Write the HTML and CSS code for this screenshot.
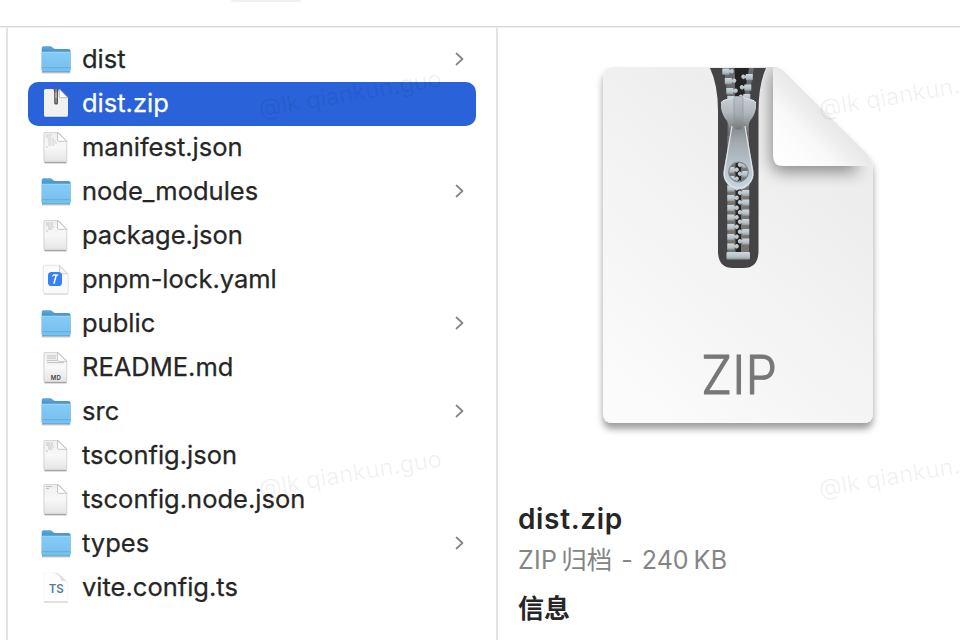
FILE: index.html
```
<!DOCTYPE html>
<html lang="zh-CN">
<head>
<meta charset="utf-8">
<title>dist.zip</title>
<link rel="stylesheet" href="styles.css">
</head>
<body>
<svg class="defs" width="0" height="0" aria-hidden="true">
  <defs>
    <linearGradient id="fback" x1="0" y1="0" x2="0" y2="1"><stop offset="0" stop-color="#5aa9dc"/><stop offset=".3" stop-color="#3f8cc6"/></linearGradient>
    <linearGradient id="ffront" x1="0" y1="0" x2="0" y2="1"><stop offset="0" stop-color="#86cbf5"/><stop offset="1" stop-color="#74bfee"/></linearGradient>
    <linearGradient id="paper" x1="0" y1="0" x2="0" y2="1"><stop offset="0" stop-color="#eeeeee"/><stop offset=".5" stop-color="#f8f8f8"/><stop offset="1" stop-color="#e4e4e4"/></linearGradient>
    <symbol id="folder" viewBox="0 0 32 32">
      <path d="M2 28.500h28" stroke="#000" stroke-opacity=".25" stroke-width="1.800"/>
      <path d="M1.700 4.200q0-2 1.800-2h6.800q1 0 1.800.8l1.200 1.200q.9.800 2 .8h13.400q1.800 0 1.800 1.700V26H1.700z" fill="url(#fback)"/>
      <path d="M1.700 9q0-1.300 1.300-1.300h26.200q1.300 0 1.300 1.300v17.700q0 1.300-1.300 1.300H3q-1.300 0-1.300-1.300z" fill="url(#ffront)"/>
      <path d="M2 23.700h28.200M2 27.600h28.200" stroke="#62aad8" stroke-width=".9"/>
      <path d="M2.200 8.300h27.700" stroke="#a0daf9" stroke-width=".7"/>
    </symbol>
    <symbol id="doc" viewBox="0 0 32 32">
      <path d="M4.500 30.500h22" stroke="#000" stroke-opacity=".42" stroke-width="1.600"/>
      <path d="M3.900 1.600Q3.900.400 5.100.400h13.200l8.500 8.500v19.800q0 1.300-1.300 1.300H5.200q-1.300 0-1.300-1.300z" fill="url(#paper)" stroke="#c4c4c4" stroke-width=".7"/>
      <path d="M17.500.600v7.500q0 1.200 1.200 1.200h8z" fill="#fff" stroke="#bcbcbc" stroke-width=".8"/>
    </symbol>
    <symbol id="lines3" viewBox="0 0 32 32"><path d="M6 3h6M6 5h5M8 7h6M8 9h8M8 11h9M8 13h7M6 15h2" stroke="#c8c8c8" stroke-width=".8" stroke-dasharray="3 .6"/></symbol>
    <symbol id="lines2" viewBox="0 0 32 32"><path d="M6 3h7M6 5h7M8 7h6M8 9h5M6 11h2" stroke="#bebebe" stroke-width=".9" stroke-dasharray="4 .6"/></symbol>
    <symbol id="lines1" viewBox="0 0 32 32"><path d="M6 2.500h6M6 4.500h3" stroke="#bbb" stroke-width=".9"/></symbol>
  </defs>
</svg>

<div class="window">
  <header class="toolbar"><span class="toolbar-button"></span></header>
  <main class="columns">
    <aside class="previous"></aside>
    <ul class="files">
      <li class="file"><svg class="icon"><use href="#folder"/></svg><span class="name">dist</span><svg class="chevron" viewBox="0 0 10 14"><path d="M1.500 1.500 7.500 7l-6 5.500"/></svg></li>
      <li class="file selected"><svg class="icon" viewBox="0 0 32 32">
        <path d="M4 2.600q0-1.700 1.700-1.700h13.300l9 9v17.300q0 1.500-1.500 1.500h-21Q4 28.700 4 27.200z" fill="#f1f1f1"/>
        <path d="M19.300.900v7.500q0 1.300 1.300 1.300H28z" fill="#fff" stroke="#aaa" stroke-width=".8"/>
        <path d="M13.500.900h5.300l-.8 3v11q0 1.700-1.900 1.700t-1.900-1.700v-11z" fill="#515151"/>
        <path d="M16.100 1.600v13" stroke="#c6c6c6" stroke-width="1.700" stroke-dasharray="1 1"/><path d="M16.100 4.600v5.500" stroke="#aaa" stroke-width="2"/>
      </svg><span class="name">dist.zip</span></li>
      <li class="file"><svg class="icon doc"><use href="#doc"/><use href="#lines3"/></svg><span class="name">manifest.json</span></li>
      <li class="file"><svg class="icon"><use href="#folder"/></svg><span class="name">node_modules</span><svg class="chevron" viewBox="0 0 10 14"><path d="M1.500 1.500 7.500 7l-6 5.500"/></svg></li>
      <li class="file"><svg class="icon doc"><use href="#doc"/><use href="#lines2"/></svg><span class="name">package.json</span></li>
      <li class="file"><svg class="icon doc" viewBox="0 0 32 32">
        <path d="M3.300 3q0-1.700 1.700-1.700h14.300l9 8.700v18q0 1.700-1.700 1.700H5q-1.700 0-1.700-1.700z" fill="#fafafa" stroke="#dedede" stroke-width=".8"/>
        <path d="M4 30.300h24" stroke="#ccc" stroke-width=".7"/>
        <path d="M19.500 1.600v6.900q0 1.200 1.200 1.200h7z" fill="#f2f2f2" stroke="#c4c4c4" stroke-width=".7"/>
        <rect x="8" y="8" width="14" height="14" rx="3.600" fill="#3880f6"/>
        <path d="M16.200 11.200 14 19.300" stroke="#fff" stroke-width="1.500" stroke-linecap="round"/><path d="m12.300 12.300 1.400-1.400 4.600.2" fill="none" stroke="#fff" stroke-width="1.100"/>
      </svg><span class="name">pnpm-lock.yaml</span></li>
      <li class="file"><svg class="icon"><use href="#folder"/></svg><span class="name">public</span><svg class="chevron" viewBox="0 0 10 14"><path d="M1.500 1.500 7.500 7l-6 5.500"/></svg></li>
      <li class="file"><svg class="icon doc" viewBox="0 0 32 32"><use href="#doc"/>
        <path d="M7 4h9M7 6.200h9M7 8.400h10M7 10.600h17" stroke="#c2c2c2" stroke-width="1"/>
        <text class="md" x="15.800" y="27.700" text-anchor="middle">MD</text></svg><span class="name">README.md</span></li>
      <li class="file"><svg class="icon"><use href="#folder"/></svg><span class="name">src</span><svg class="chevron" viewBox="0 0 10 14"><path d="M1.500 1.500 7.500 7l-6 5.500"/></svg></li>
      <li class="file"><svg class="icon doc"><use href="#doc"/><use href="#lines2"/></svg><span class="name">tsconfig.json</span></li>
      <li class="file"><svg class="icon doc"><use href="#doc"/><use href="#lines1"/></svg><span class="name">tsconfig.node.json</span></li>
      <li class="file"><svg class="icon"><use href="#folder"/></svg><span class="name">types</span><svg class="chevron" viewBox="0 0 10 14"><path d="M1.500 1.500 7.500 7l-6 5.500"/></svg></li>
      <li class="file"><svg class="icon doc" viewBox="0 0 32 32">
        <path d="M4 1h13.500L27.500 10v20H4z" fill="#fefefe" stroke="#f3f3f3" stroke-width=".6"/>
        <path d="M14 1h4l9.500 9q-2.500-1.500-6.500-1.200.2-5.800-7-7.800z" fill="#dedede"/>
        <path d="M4 30h24" stroke="#c2c2c2" stroke-width=".9"/>
        <text class="ts" x="16.300" y="21" text-anchor="middle">TS</text></svg><span class="name">vite.config.ts</span></li>
    </ul>
    <section class="preview">
      <svg class="artwork" viewBox="590 55 300 390" width="300" height="390">
        <defs>
          <linearGradient id="sheet" gradientUnits="userSpaceOnUse" x1="625" y1="400" x2="840" y2="150"><stop offset="0" stop-color="#fbfbfb"/><stop offset="1" stop-color="#ececec"/></linearGradient>
          <linearGradient id="fold" gradientUnits="userSpaceOnUse" x1="779" y1="160" x2="823" y2="116"><stop offset="0" stop-color="#fff"/><stop offset=".6" stop-color="#f8f8f8"/><stop offset="1" stop-color="#e9e9e9"/></linearGradient>
          <linearGradient id="steel" x1="0" y1="0" x2="0" y2="1"><stop offset="0" stop-color="#c8d1d6"/><stop offset=".45" stop-color="#b0b8bd"/><stop offset="1" stop-color="#777"/></linearGradient>
          <linearGradient id="strap" x1="0" y1="0" x2="0" y2="1"><stop offset="0" stop-color="#b9c4ca"/><stop offset=".55" stop-color="#a4a9ad"/><stop offset="1" stop-color="#747779"/></linearGradient>
          <linearGradient id="pull" x1="0" y1="0" x2="0" y2="1"><stop offset="0" stop-color="#7d8183"/><stop offset=".3" stop-color="#a5abb0"/><stop offset=".7" stop-color="#bcc8cf"/><stop offset="1" stop-color="#c7d4dd"/></linearGradient>
          <linearGradient id="tooth" x1="0" y1="0" x2="0" y2="1"><stop offset="0" stop-color="#cbd8de"/><stop offset=".65" stop-color="#b5c0c5"/><stop offset="1" stop-color="#8c9497"/></linearGradient>
          <filter id="drop" x="-10%" y="-10%" width="120%" height="120%"><feDropShadow dx="0" dy="6" stdDeviation="3.500" flood-opacity=".38"/></filter>
          <filter id="soft" x="-30%" y="-30%" width="160%" height="160%"><feGaussianBlur stdDeviation="8"/></filter>
          <clipPath id="page"><path d="M603 77q0-10 10-10h160q6 0 10 4l84 83q6 6 6 15v244q0 10-10 10H613q-10 0-10-10z"/></clipPath>
          <path id="lt" d="M727.300 0h7v1.600l1-.2q.6-1.200 1.900-.9 1.700 1 1.700 2.300t-1.700 2.300q-1.300.3-1.900-.9l-1-.2v2.200h-7z" fill="url(#tooth)"/>
          <path id="rt" d="M749.300 0h-7v1.600l-1-.2q-.6-1.200-1.900-.9-1.700 1-1.700 2.300t1.700 2.300q1.300.3 1.900-.9l1-.2v2.200h7z" fill="url(#tooth)"/>
        </defs>
        <path d="M603 77q0-10 10-10h160q6 0 10 4l84 83q6 6 6 15v244q0 10-10 10H613q-10 0-10-10z" fill="url(#sheet)" filter="url(#drop)"/>
        <g clip-path="url(#page)">
          <path d="M771 63v94q0 15 12 15h76L852 152z" fill="#000" opacity=".42" filter="url(#soft)"/>
          <path d="M710 68h56q-7.500 17-7.500 43v140q0 17-15 17h-10.500q-15 0-15-17V111q0-26-8-43z" fill="#444446"/>
          <path d="m724 68 3.500 28v155h9.500V95l-3-27zM754 68l-5 28v155h-8V95l7-27z" fill="#77777a" opacity=".8"/>
          <path d="M727.500 136h21.500v118h-21.500z" fill="#77746f"/>
          <path d="M735 68h14l-6 35h-8zM735.500 136h5.500v116h-5.500z" fill="#242425"/>
          <g>
            <use href="#lt" transform="translate(-5 68.500)"/><use href="#lt" transform="translate(-2.500 78)"/><use href="#lt" transform="translate(-1 88)"/><use href="#lt" transform="translate(0 96)"/>
            <use href="#rt" transform="translate(3.500 74)"/><use href="#rt" transform="translate(2 84.500)"/><use href="#rt" transform="translate(1 94)"/>
            <use href="#lt" y="157"/><use href="#lt" y="167"/><use href="#lt" y="176"/><use href="#lt" y="185.500"/><use href="#lt" y="195"/><use href="#lt" y="205"/><use href="#lt" y="214.500"/><use href="#lt" y="224"/><use href="#lt" y="234"/><use href="#lt" y="243.500"/>
            <use href="#rt" y="162"/><use href="#rt" y="171"/><use href="#rt" y="180"/><use href="#rt" y="190"/><use href="#rt" y="199.500"/><use href="#rt" y="209.500"/><use href="#rt" y="219"/><use href="#rt" y="229"/><use href="#rt" y="238.500"/>
          </g>
          <rect x="726.500" y="252" width="23.500" height="7.500" rx="1" fill="url(#tooth)"/>
          <path d="M721 103q1-3 6-3.500 5-1 7-2.500h9q2 1.500 7 2.500 5 .5 6 3.500v5q-1 7-6 13-2 4-2 11h-19q0-7-2-11-5-6-6-13z" fill="url(#steel)"/>
          <path d="M721 103q1-3 6-3.500 5-1 7-2.500h9q2 1.500 7 2.500 5 .5 6 3.500" fill="none" stroke="#e0e9ed" stroke-width="1"/>
          <path fill-rule="evenodd" d="M733 123q5.500 10 11 0l2 6 7.500 42q1 8-4 13-4.500 5.500-11 5.500t-11-5.500q-5-5-4-13l7.500-42zM728.500 172a10 10 0 0 0 20 0a10 10 0 0 0-20 0z" fill="url(#pull)"/>
          <path d="m732 126-7.500 45q-1 8 4 12.500 4.500 4.500 10 4.500t10-4.500q5-4.500 4-12.500L745 126" fill="none" stroke="#dbe5ea" stroke-width="1.200"/>
          <circle cx="738.500" cy="172" r="9.800" fill="none" stroke="#808991" stroke-width="1.200"/>
          <path d="M734 98q0-1.500 1.500-1.500h6q1.500 0 1.500 1.500v29q0 3-4.500 3t-4.500-3z" fill="url(#strap)" stroke="#8d9599" stroke-width=".6"/>
        </g>
        <path d="M773 67q6 0 10 4l84 83q3 3 4.500 8 1 4-5.500 4h-83q-10 0-10-10z" fill="url(#fold)"/>
        <text class="kind" x="739" y="393.500" text-anchor="middle" textLength="76" lengthAdjust="spacingAndGlyphs">ZIP</text>
      </svg>
      <div class="details">
        <h1 class="title">dist.zip</h1>
        <p class="meta"><span class="latin">ZIP</span><span class="cjk">归档</span><span class="dash">-</span><span>240</span><span class="unit">KB</span></p>
        <h2 class="heading">信息</h2>
      </div>
    </section>
  </main>
  <span class="watermark wm-a">@lk qiankun.guo</span>
  <span class="watermark wm-b">@lk qiankun.guo</span>
  <span class="watermark wm-c">@lk qiankun.</span>
  <span class="watermark wm-d">@lk qiankun.</span>
</div>
</body>
</html>
```
FILE: styles.css
```
* { box-sizing: border-box; }
body { margin: 0; background: #fff; color: #262626; font-family: Inter, "Noto Sans CJK SC", sans-serif; }
.defs { position: absolute; }
.window { position: relative; width: 960px; height: 640px; overflow: hidden; display: flex; flex-direction: column; }
.toolbar { height: 28px; flex: none; border-bottom: 1px solid #f0f0f0; box-shadow: inset 0 -1px #d6d6d6; padding-left: 231px; }
.toolbar-button { display: block; width: 70px; height: 2px; background: #f0f0f0; border-radius: 0 0 8px 8px; }
.columns { flex: 1; min-height: 0; display: grid; grid-template-columns: 8px 490px 1fr; }
.previous { border-right: 2px solid #e3e3e3; }
.files { list-style: none; margin: 0; padding: 10px 20px 0; border-right: 2px solid #e3e3e3; }
.file { height: 44px; display: flex; align-items: center; padding: 0 11px 0 12px; border-radius: 10px; font-size: 25.5px; }
.selected { background: #2962d9; color: #fff; }
.icon { width: 32px; height: 32px; margin-right: 10px; flex: none; }
.doc { margin-bottom: 1px; }
.name { flex: 1; line-height: 42px; margin-bottom: 2px; white-space: nowrap; -webkit-text-stroke: 0.25px; }
.chevron { width: 10px; height: 14px; margin-bottom: 2px; fill: none; stroke: #858585; stroke-width: 1.7; stroke-linecap: round; stroke-linejoin: round; }
.md { font: 600 6px Inter, sans-serif; fill: #444; }
.ts { font: 600 11.5px Inter, sans-serif; fill: #527f9c; }
.preview { padding: 27px 0 0 20px; min-width: 0; }
.artwork { display: block; margin-left: 72px; }
.kind { font: 300 53px Inter, sans-serif; fill: #777; stroke: #777; stroke-width: 1; }
.details { padding-top: 53px; }
.title { margin: 0; font-size: 28px; line-height: 42px; font-weight: 600; letter-spacing: 0.65px; }
.meta { margin: 0; display: flex; height: 42px; align-items: center; font-size: 25px; line-height: 40px; padding-bottom: 2px; color: #858585; white-space: nowrap; }
.latin { letter-spacing: 0.3px; }
.cjk { margin-left: 4px; font-size: 25.5px; }
.dash { margin: 0 9px; }
.unit { margin-left: 5px; letter-spacing: 0.3px; }
.heading { margin: 6px 0 0; font-size: 26px; line-height: 42px; font-weight: 700; }
.watermark { position: absolute; font-size: 23.5px; line-height: 28px; color: rgba(0, 0, 0, .06); -webkit-text-stroke: 0.2px; transform: rotate(-9.5deg); transform-origin: 0 50%; white-space: nowrap; }
.wm-a { left: 259px; top: 95px; }
.wm-b { left: 259px; top: 475px; }
.wm-c { left: 819px; top: 95px; }
.wm-d { left: 819px; top: 475px; }
```
